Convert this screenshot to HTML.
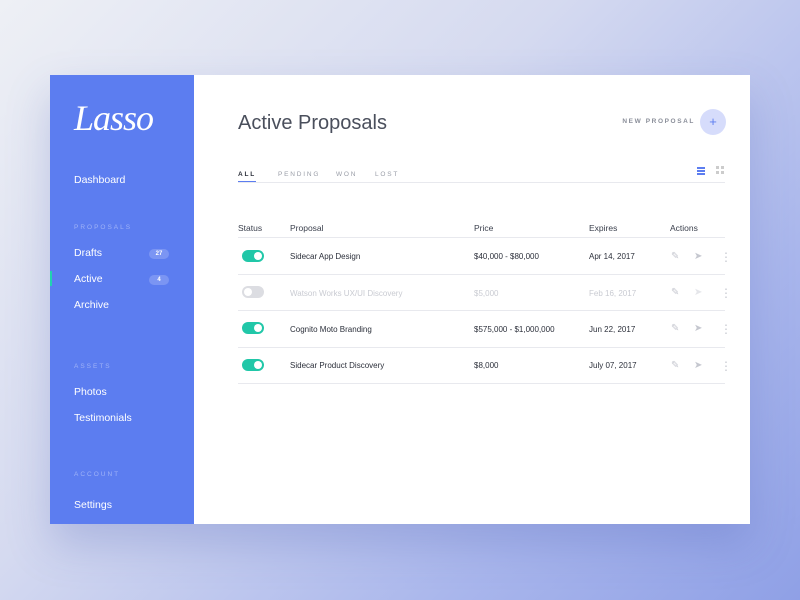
<!DOCTYPE html>
<html><head><style>
*{margin:0;padding:0;box-sizing:border-box}
body{width:800px;height:600px;overflow:hidden;font-family:"Liberation Sans",sans-serif;background:linear-gradient(135deg,#eef0f5 0%,#d5daf0 40%,#a9b6ec 75%,#8fa0e6 100%);position:relative}
.card{position:absolute;left:50px;top:75px;width:700px;height:449px;background:#fff;box-shadow:0 20px 40px rgba(70,90,180,.25)}
.side{position:absolute;left:0;top:0;width:144px;height:449px;background:#5c7df0;color:#fff}
.side .it{position:absolute;left:24px;font-size:10.5px}
.side .hd{position:absolute;left:24px;font-size:6.5px;letter-spacing:2px;color:#9fb2f7}
.badge{position:absolute;left:99px;width:20px;height:10px;border-radius:5px;background:#7b95f3;font-size:6px;font-weight:bold;text-align:center;line-height:10px}
.main{position:absolute;left:144px;top:0;right:0;bottom:0}
.abs{position:absolute}
.row{position:absolute;left:44px;width:487px;height:1px;background:#e8e9ee}
.t{position:absolute;font-size:8px;color:#2b2f3a}
.h{font-size:8.5px;color:#3a3f4c}
.dim{color:#c9cbd2}
.tog{position:absolute;left:48px;width:22px;height:12px;border-radius:6px;background:#21c7a8}
.tog::after{content:"";position:absolute;right:2px;top:2px;width:8px;height:8px;border-radius:50%;background:#fff}
.tog.off{background:#dcdde2}.tog.off::after{left:2px;right:auto}
.ic{position:absolute;font-size:10px;color:#c5c7cf}
</style></head><body>
<div class="card">
<div class="side">
<div class="abs" style="left:24px;top:22px;font-family:'Liberation Serif',serif;font-style:italic;font-size:36px;color:#fff;letter-spacing:-1px">Lasso</div>
<div class="it" style="top:99px">Dashboard</div>
<div class="hd" style="top:149px">PROPOSALS</div>
<div class="it" style="top:172px">Drafts</div><div class="badge" style="top:174px">27</div>
<div class="abs" style="left:0;top:196px;width:2px;height:15px;background:#21d3b0"></div>
<div class="it" style="top:198px">Active</div><div class="badge" style="top:200px">4</div>
<div class="it" style="top:224px">Archive</div>
<div class="hd" style="top:288px">ASSETS</div>
<div class="it" style="top:311px">Photos</div>
<div class="it" style="top:337px">Testimonials</div>
<div class="hd" style="top:396px">ACCOUNT</div>
<div class="it" style="top:424px">Settings</div>
</div>
<div class="main">
<div class="abs" style="left:44px;top:37px;font-size:20px;color:#4a4f5c">Active Proposals</div>
<div class="abs" style="right:55px;top:43px;font-size:6.5px;letter-spacing:1.6px;color:#8a8e99;font-weight:bold">NEW PROPOSAL</div>
<div class="abs" style="left:506px;top:34px;width:26px;height:26px;border-radius:50%;background:#d6dcfb;color:#5c7df0;text-align:center;line-height:25px;font-size:13px">+</div>
<div class="abs" style="left:44px;top:96px;font-size:6.5px;letter-spacing:1.8px;font-weight:bold;color:#2b2f3a">ALL</div>
<div class="abs" style="left:44px;top:106px;width:18px;height:2px;background:#5c7df0"></div>
<div class="abs" style="left:84px;top:96px;font-size:6.5px;letter-spacing:1.8px;color:#999da7">PENDING</div>
<div class="abs" style="left:142px;top:96px;font-size:6.5px;letter-spacing:1.8px;color:#999da7">WON</div>
<div class="abs" style="left:181px;top:96px;font-size:6.5px;letter-spacing:1.8px;color:#999da7">LOST</div>
<div class="row" style="top:107px"></div>
<div class="abs" style="left:503px;top:92px;width:8px;height:1.5px;background:#5c7df0;box-shadow:0 3px 0 #5c7df0,0 6px 0 #5c7df0"></div>
<div class="abs" style="left:522px;top:91px;width:3px;height:3px;background:#ccc;box-shadow:5px 0 0 #ccc,0 5px 0 #ccc,5px 5px 0 #ccc"></div>
<div class="t h" style="left:44px;top:148px">Status</div><div class="t h" style="left:96px;top:148px">Proposal</div><div class="t h" style="left:280px;top:148px">Price</div><div class="t h" style="left:395px;top:148px">Expires</div><div class="t h" style="left:476px;top:148px">Actions</div>
<div class="row" style="top:162px"></div>
<div class="tog" style="top:175px"></div><div class="t" style="left:96px;top:177px">Sidecar App Design</div><div class="t" style="left:280px;top:177px">$40,000 - $80,000</div><div class="t" style="left:395px;top:177px">Apr 14, 2017</div>
<div class="row" style="top:199px"></div>
<div class="tog off" style="top:211px"></div><div class="t dim" style="left:96px;top:214px">Watson Works UX/UI Discovery</div><div class="t dim" style="left:280px;top:214px">$5,000</div><div class="t dim" style="left:395px;top:214px">Feb 16, 2017</div>
<div class="row" style="top:235px"></div>
<div class="tog" style="top:247px"></div><div class="t" style="left:96px;top:250px">Cognito Moto Branding</div><div class="t" style="left:280px;top:250px">$575,000 - $1,000,000</div><div class="t" style="left:395px;top:250px">Jun 22, 2017</div>
<div class="row" style="top:272px"></div>
<div class="tog" style="top:284px"></div><div class="t" style="left:96px;top:286px">Sidecar Product Discovery</div><div class="t" style="left:280px;top:286px">$8,000</div><div class="t" style="left:395px;top:286px">July 07, 2017</div>
<div class="row" style="top:308px"></div>
<div class="ic" style="left:477px;top:176px">✎</div><div class="ic" style="left:500px;top:176px">➤</div><div class="ic" style="left:526px;top:175px;font-size:12px">⋮</div>
<div class="ic" style="left:477px;top:212px">✎</div><div class="ic" style="left:500px;top:212px;color:#e5e6ea">➤</div><div class="ic" style="left:526px;top:211px;font-size:12px">⋮</div>
<div class="ic" style="left:477px;top:248px">✎</div><div class="ic" style="left:500px;top:248px">➤</div><div class="ic" style="left:526px;top:247px;font-size:12px">⋮</div>
<div class="ic" style="left:477px;top:285px">✎</div><div class="ic" style="left:500px;top:285px">➤</div><div class="ic" style="left:526px;top:284px;font-size:12px">⋮</div>
</div>
</div>
</body></html>
